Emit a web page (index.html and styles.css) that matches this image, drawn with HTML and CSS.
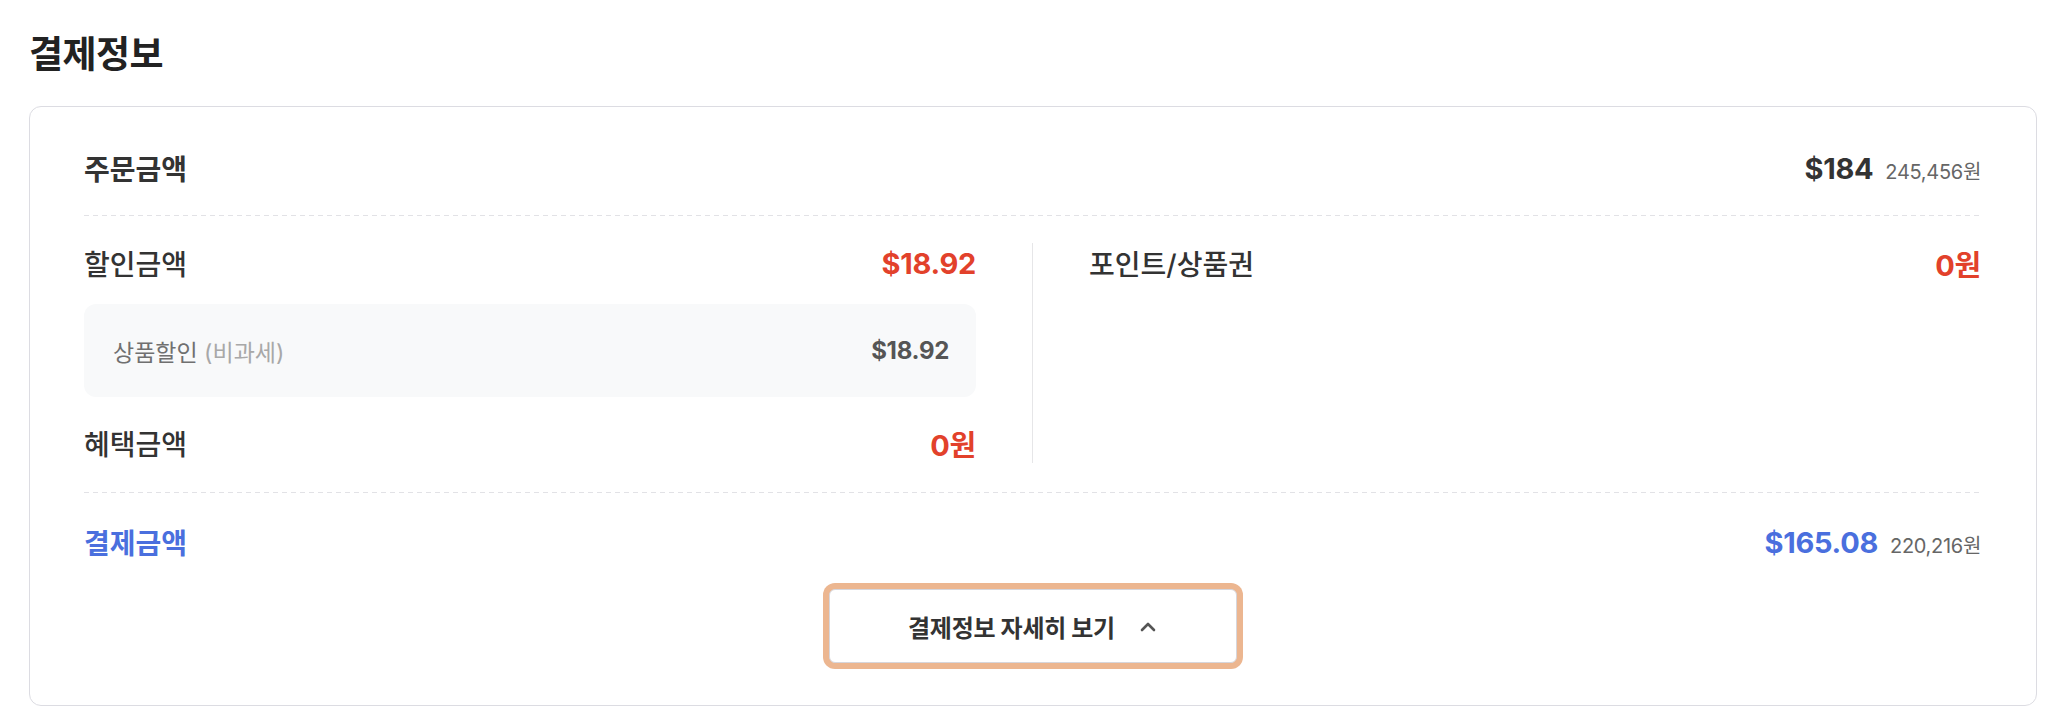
FILE: index.html
```html
<!DOCTYPE html>
<html lang="ko">
<head>
<meta charset="utf-8">
<title>결제정보</title>
<link rel="stylesheet" href="styles.css">
</head>
<body>
<div class="page">
  <h2 class="title">결제정보</h2>
  <div class="card">
    <div class="row">
      <span class="label bold">주문금액</span>
      <span class="amount">
        <b class="usd">$184</b>
        <span class="krw">245,456원</span>
      </span>
    </div>
    <div class="dash"></div>
    <div class="detail">
      <div class="col">
        <div class="row">
          <span class="label">할인금액</span>
          <b class="usd red">$18.92</b>
        </div>
        <div class="subbox">
          <span class="sublabel">상품할인 <span class="muted">(비과세)</span></span>
          <b class="subvalue">$18.92</b>
        </div>
        <div class="row row-gap">
          <span class="label">혜택금액</span>
          <b class="usd red">0원</b>
        </div>
      </div>
      <div class="vline"></div>
      <div class="col">
        <div class="row">
          <span class="label">포인트/상품권</span>
          <b class="usd red">0원</b>
        </div>
      </div>
    </div>
    <div class="dash"></div>
    <div class="row row-total">
      <span class="label bold blue">결제금액</span>
      <span class="amount">
        <b class="usd blue">$165.08</b>
        <span class="krw">220,216원</span>
      </span>
    </div>
    <div class="btn-wrap">
      <button class="more-btn" type="button">
        <span>결제정보 자세히 보기</span>
        <svg class="chev" width="18" height="11" viewBox="0 0 18 11" aria-hidden="true">
          <path d="M3 9 L9 3 L15 9" fill="none" stroke="#555" stroke-width="2.6" stroke-linecap="round" stroke-linejoin="round"/>
        </svg>
      </button>
    </div>
  </div>
</div>
</body>
</html>
```

FILE: styles.css
```css
* { box-sizing: border-box; }

body {
  margin: 0;
  background: #fff;
  font-family: Inter, "Noto Sans CJK KR", "Noto Sans", sans-serif;
  color: #333;
}

.page {
  padding: 35px 21px 0 29px;
}

.title {
  margin: 0 0 31px;
  font-size: 37px;
  line-height: 40px;
  font-weight: 700;
  letter-spacing: -0.5px;
  color: #222;
}

.card {
  border: 1px solid #dcdce2;
  border-radius: 12px;
  padding: 41px 55px 42px 54px;
  background: #fff;
}

.row {
  display: flex;
  align-items: center;
  justify-content: space-between;
  height: 40px;
}

.card > .row:first-child {
  margin-bottom: 27px;
}

.label {
  font-size: 28px;
  font-weight: 500;
  color: #333;
}

.label.bold { font-weight: 700; }

.amount {
  display: flex;
  align-items: baseline;
  gap: 12px;
}

.usd {
  font-size: 29px;
  font-weight: 700;
  color: #333;
  letter-spacing: -0.3px;
}

.krw {
  font-size: 20px;
  font-weight: 400;
  color: #666;
  letter-spacing: -0.3px;
}

.red { color: #e2412b; }
.blue { color: #4a6fde; }

.dash {
  height: 1px;
  background-image: repeating-linear-gradient(to right, #e2e2e6 0 5px, transparent 5px 9px);
}

.detail {
  display: grid;
  grid-template-columns: 1fr 1px 1fr;
  column-gap: 56px;
  padding: 27px 0 29px;
}

.vline {
  background: #e6e6e8;
}

.subbox {
  margin-top: 21px;
  height: 93px;
  padding: 0 27px 0 29px;
  border-radius: 12px;
  background: #f8f9fa;
  display: flex;
  align-items: center;
  justify-content: space-between;
}

.sublabel {
  font-size: 23px;
  color: #707070;
}

.muted { color: #a8a8a8; }

.subvalue {
  font-size: 24px;
  font-weight: 700;
  color: #555;
  letter-spacing: -0.3px;
}

.row-gap { margin-top: 26px; }

.row-total { margin-top: 29px; }

.btn-wrap {
  display: flex;
  justify-content: center;
  margin-top: 27px;
}

.more-btn {
  width: 408px;
  height: 74px;
  border: 1px solid #d6d6dc;
  border-radius: 6px;
  background: #fff;
  box-shadow: 0 0 0 6px #ecb690;
  display: flex;
  align-items: center;
  justify-content: center;
  gap: 24px;
  font-family: inherit;
  font-size: 24px;
  font-weight: 700;
  color: #333;
  letter-spacing: -0.3px;
  cursor: pointer;
  padding: 0;
}

.chev { display: block; }
```
